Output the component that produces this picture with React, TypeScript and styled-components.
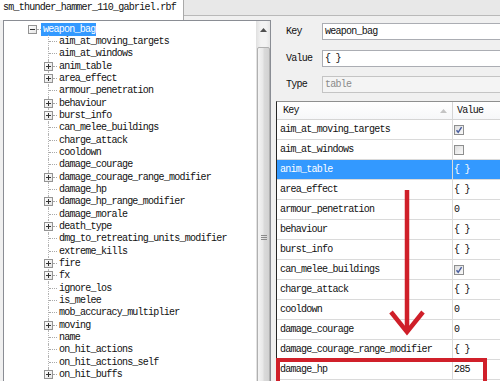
import React from 'react';
import styled, { createGlobalStyle } from 'styled-components';

const GlobalStyle = createGlobalStyle`
  html, body { margin: 0; padding: 0; background: #f0f0f0; overflow: hidden; }
  body { font-family: "Liberation Mono", "DejaVu Sans Mono", monospace; }
`;

const Window = styled.div`
  position: relative;
  width: 500px;
  height: 381px;
  overflow: hidden;
  display: flex;
  flex-direction: column;
  background: #f0f0f0;
  color: #111;
  font-family: "Liberation Mono", "DejaVu Sans Mono", monospace;
  font-size: 10px;
  letter-spacing: -0.76px;
`;

const TabBar = styled.div`
  display: flex;
  height: 20px;
  flex: none;
`;

const Tab = styled.div`
  width: 184px;
  height: 20px;
  box-sizing: border-box;
  background: #fff;
  border-right: 1px solid #a9a9a9;
  padding: 1px 0 0 3px;
  line-height: 14px;
  white-space: nowrap;
`;

const TabFiller = styled.div`
  flex: 1;
  height: 16px;
  box-sizing: border-box;
  background: #e8e8e8;
  border-bottom: 1px solid #b9b9b9;
`;

const Main = styled.div`
  display: flex;
  flex: 1;
  min-height: 0;
  gap: 5px;
  padding-left: 3px;
`;

const TreePane = styled.div`
  display: flex;
  width: 268px;
  flex: none;
  box-sizing: border-box;
  border: 1px solid #8a8d94;
  border-bottom: none;
  background: #fff;
`;

const TreeView = styled.div`
  flex: 1;
  padding-top: 2px;
  overflow: hidden;
`;

const Scrollbar = styled.div`
  width: 14px;
  flex: none;
  box-sizing: border-box;
  display: flex;
  flex-direction: column;
  border-left: 1px solid #e2e2e2;
  background: linear-gradient(to right, #e4e4e4, #f3f3f3 30%, #f3f3f3 70%, #e6e6e6);
`;

const ScrollArrow = styled.div`
  height: 17px;
  flex: none;
  display: flex;
  align-items: center;
  justify-content: center;
`;

const ScrollThumb = styled.div`
  margin-top: 9px;
  height: 380px;
  flex: none;
  box-sizing: border-box;
  border: 1px solid #b0b0b0;
  border-radius: 2px;
  background: linear-gradient(to right, #f4f4f4, #e8e8e8 45%, #dadada 55%, #d2d2d2);
  display: flex;
  flex-direction: column;
  align-items: center;
  justify-content: center;
  gap: 1px;
`;

const GripLine = styled.span`
  width: 6px;
  height: 1px;
  background: #8a8a8a;
`;

const TreeRow = styled.div<{ $indent: number }>`
  display: flex;
  align-items: center;
  height: 12.33px;
  padding-left: ${(p) => p.$indent}px;
  white-space: nowrap;
`;

const Gutter = styled.div<{ $vline?: 'none' | 'full' | 'half' }>`
  position: relative;
  width: 13px;
  height: 100%;
  flex: none;
  display: flex;
  align-items: center;
  &::before {
    content: '';
    display: ${(p) => (p.$vline && p.$vline !== 'none' ? 'block' : 'none')};
    position: absolute;
    left: 4px;
    top: 0;
    height: ${(p) => (p.$vline === 'half' ? '50%' : '100%')};
    border-left: 1px dotted #b4b4b4;
  }
`;

const Connector = styled.span<{ $offset: number }>`
  flex: 1;
  height: 0;
  margin-left: ${(p) => p.$offset}px;
  border-top: 1px dotted #a8a8a8;
`;

const BoxSvg = styled.svg`
  position: relative;
  flex: none;
  width: 9px;
  height: 9px;
`;

const Label = styled.span<{ $selected?: boolean }>`
  height: 13px;
  line-height: 13px;
  padding: 0 1px 0 2px;
  background: ${(p) => (p.$selected ? '#3399ff' : 'transparent')};
  color: ${(p) => (p.$selected ? '#fff' : '#111')};
`;

const RightPane = styled.div`
  flex: 1;
  min-width: 0;
  display: flex;
  flex-direction: column;
`;

const Form = styled.div`
  display: grid;
  grid-template-columns: 36px 1fr;
  grid-auto-rows: 17px;
  row-gap: 9.5px;
  padding: 3px 0 0 10px;
  align-items: center;
`;

const FormLabel = styled.span`
  line-height: 17px;
  color: #111;
`;

const Field = styled.div<{ $disabled?: boolean }>`
  height: 17px;
  box-sizing: border-box;
  margin-right: -6px;
  border: 1px solid ${(p) => (p.$disabled ? '#c4c4c4' : '#abadb3')};
  background: ${(p) => (p.$disabled ? '#f4f4f4' : '#fff')};
  color: ${(p) => (p.$disabled ? '#8a8a8a' : '#111')};
  padding-left: 2px;
  line-height: 15px;
  white-space: nowrap;
`;

const Table = styled.div`
  margin-top: 8px;
  width: 250px;
  flex: 1;
  border-left: 1px solid #262626;
  border-top: 1px solid #8e8f8f;
  background: #fff;
`;

const HeaderRow = styled.div`
  display: grid;
  grid-template-columns: 175px 1fr;
  height: 18px;
  box-sizing: border-box;
  border-bottom: 1px solid #d5d5d5;
  background: linear-gradient(#ffffff, #f6f7f9);
`;

const HeaderCell = styled.div<{ $divider?: boolean }>`
  display: flex;
  align-items: center;
  justify-content: space-between;
  padding: 0 5px 0 ${(p) => (p.$divider ? 4 : 6)}px;
  border-left: ${(p) => (p.$divider ? '1px solid #d5d5d5' : 'none')};
  line-height: 17px;
`;

const DataRow = styled.div<{ $selected?: boolean }>`
  display: grid;
  grid-template-columns: 175px 1fr;
  height: 20px;
  box-sizing: border-box;
  border-bottom: 1px solid #dadada;
  background: ${(p) => (p.$selected ? '#3399ff' : '#fff')};
  color: ${(p) => (p.$selected ? '#fff' : '#111')};
`;

const KeyCell = styled.div`
  padding-left: 3px;
  line-height: 19px;
  white-space: nowrap;
`;

const ValueCell = styled.div`
  display: flex;
  align-items: center;
  padding-left: 1px;
  border-left: 1px solid #dadada;
  line-height: 19px;
  white-space: nowrap;
`;

const CheckSvg = styled.svg`
  width: 10px;
  height: 10px;
  flex: none;
`;

const Annotation = styled.svg`
  position: absolute;
  left: 385px;
  top: 186px;
  width: 46px;
  height: 152px;
`;

const Highlight = styled.div`
  position: absolute;
  left: 276px;
  top: 358px;
  width: 211px;
  height: 50px;
  box-sizing: border-box;
  border: 4px solid #d0202a;
`;

const Expander: React.FC<{ open?: boolean }> = ({ open }) => (
  <BoxSvg viewBox="0 0 9 9">
    <defs>
      <linearGradient id="bx" x1="0" y1="0" x2="1" y2="1">
        <stop offset="0" stopColor="#ffffff" />
        <stop offset="1" stopColor="#e4e4e4" />
      </linearGradient>
    </defs>
    <rect x="0.5" y="0.5" width="8" height="8" fill="url(#bx)" stroke="#939393" />
    <path d="M2 4.5H7" stroke="#333" />
    {!open && <path d="M4.5 2V7" stroke="#333" />}
  </BoxSvg>
);

const CheckBox: React.FC<{ checked?: boolean }> = ({ checked }) => (
  <CheckSvg viewBox="0 0 10 10">
    <defs>
      <linearGradient id="cb" x1="0" y1="0" x2="1" y2="1">
        <stop offset="0" stopColor="#dcdcdc" />
        <stop offset="1" stopColor="#fbfbfb" />
      </linearGradient>
    </defs>
    <rect x="0.5" y="0.5" width="9" height="9" fill="url(#cb)" stroke="#8e8f8f" />
    {checked && <path d="M2.5 5.2L4.2 7.3L7.6 2.2" fill="none" stroke="#4a5fa0" strokeWidth="1.5" />}
  </CheckSvg>
);

type TreeItem = { name: string; expandable?: boolean };

const treeItems: TreeItem[] = [
  { name: 'aim_at_moving_targets' },
  { name: 'aim_at_windows' },
  { name: 'anim_table', expandable: true },
  { name: 'area_effect', expandable: true },
  { name: 'armour_penetration' },
  { name: 'behaviour', expandable: true },
  { name: 'burst_info', expandable: true },
  { name: 'can_melee_buildings' },
  { name: 'charge_attack' },
  { name: 'cooldown' },
  { name: 'damage_courage' },
  { name: 'damage_courage_range_modifier', expandable: true },
  { name: 'damage_hp' },
  { name: 'damage_hp_range_modifier', expandable: true },
  { name: 'damage_morale' },
  { name: 'death_type', expandable: true },
  { name: 'dmg_to_retreating_units_modifier' },
  { name: 'extreme_kills' },
  { name: 'fire', expandable: true },
  { name: 'fx', expandable: true },
  { name: 'ignore_los' },
  { name: 'is_melee' },
  { name: 'mob_accuracy_multiplier' },
  { name: 'moving', expandable: true },
  { name: 'name' },
  { name: 'on_hit_actions' },
  { name: 'on_hit_actions_self' },
  { name: 'on_hit_buffs', expandable: true },
];

type Val = { kind: 'check'; checked: boolean } | { kind: 'text'; text: string };

const tableRows: { key: string; value: Val; selected?: boolean }[] = [
  { key: 'aim_at_moving_targets', value: { kind: 'check', checked: true } },
  { key: 'aim_at_windows', value: { kind: 'check', checked: false } },
  { key: 'anim_table', value: { kind: 'text', text: '{ }' }, selected: true },
  { key: 'area_effect', value: { kind: 'text', text: '{ }' } },
  { key: 'armour_penetration', value: { kind: 'text', text: '0' } },
  { key: 'behaviour', value: { kind: 'text', text: '{ }' } },
  { key: 'burst_info', value: { kind: 'text', text: '{ }' } },
  { key: 'can_melee_buildings', value: { kind: 'check', checked: true } },
  { key: 'charge_attack', value: { kind: 'text', text: '{ }' } },
  { key: 'cooldown', value: { kind: 'text', text: '0' } },
  { key: 'damage_courage', value: { kind: 'text', text: '0' } },
  { key: 'damage_courage_range_modifier', value: { kind: 'text', text: '{ }' } },
  { key: 'damage_hp', value: { kind: 'text', text: '285' } },
];

export default function App() {
  return (
    <Window>
      <GlobalStyle />
      <TabBar>
        <Tab>sm_thunder_hammer_110_gabriel.rbf</Tab>
        <TabFiller />
      </TabBar>
      <Main>
        <TreePane>
          <TreeView>
            <TreeRow $indent={24}>
              <Gutter>
                <Expander open />
                <Connector $offset={0} />
              </Gutter>
              <Label $selected>weapon_bag</Label>
            </TreeRow>
            {treeItems.map((item, i) => (
              <TreeRow key={item.name} $indent={40}>
                <Gutter $vline={i === treeItems.length - 1 ? 'half' : 'full'}>
                  {item.expandable ? (
                    <>
                      <Expander />
                      <Connector $offset={0} />
                    </>
                  ) : (
                    <Connector $offset={5} />
                  )}
                </Gutter>
                <Label>{item.name}</Label>
              </TreeRow>
            ))}
          </TreeView>
          <Scrollbar>
            <ScrollArrow>
              <svg width="7" height="4" viewBox="0 0 7 4">
                <path d="M0 4L3.5 0L7 4Z" fill="#505050" />
              </svg>
            </ScrollArrow>
            <ScrollThumb>
              <GripLine />
              <GripLine />
              <GripLine />
            </ScrollThumb>
          </Scrollbar>
        </TreePane>
        <RightPane>
          <Form>
            <FormLabel>Key</FormLabel>
            <Field>weapon_bag</Field>
            <FormLabel>Value</FormLabel>
            <Field>{'{ }'}</Field>
            <FormLabel>Type</FormLabel>
            <Field $disabled>table</Field>
          </Form>
          <Table>
            <HeaderRow>
              <HeaderCell>
                <span>Key</span>
                <svg width="7" height="4" viewBox="0 0 7 4">
                  <path d="M0 4L3.5 0L7 4Z" fill="#c4c4c4" />
                </svg>
              </HeaderCell>
              <HeaderCell $divider>
                <span>Value</span>
              </HeaderCell>
            </HeaderRow>
            {tableRows.map((row) => (
              <DataRow key={row.key} $selected={row.selected}>
                <KeyCell>{row.key}</KeyCell>
                <ValueCell>
                  {row.value.kind === 'check' ? (
                    <CheckBox checked={row.value.checked} />
                  ) : (
                    row.value.text
                  )}
                </ValueCell>
              </DataRow>
            ))}
          </Table>
        </RightPane>
      </Main>
      <Annotation viewBox="0 0 46 152">
        <path d="M22 4V144" stroke="#cf1f29" strokeWidth="4.5" fill="none" />
        <path d="M6 126L22 146L38 126" stroke="#cf1f29" strokeWidth="4.5" fill="none" />
      </Annotation>
      <Highlight />
    </Window>
  );
}
